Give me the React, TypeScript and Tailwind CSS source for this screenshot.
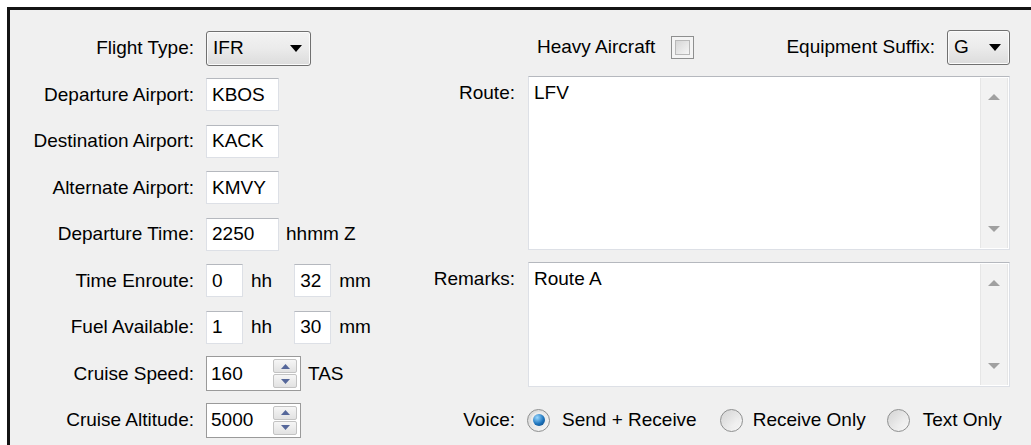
import React from 'react';

const font = "font-['Liberation_Sans',Arial,sans-serif]";

function TextBox({ value, className = '' }: { value: string; className?: string }) {
  return (
    <div
      className={`flex h-[33px] items-center border border-[#dde0e6] border-t-[#b5b8be] bg-white pl-[5px] ${className}`}
    >
      {value}
    </div>
  );
}

function Combo({ value, className = '' }: { value: string; className?: string }) {
  return (
    <div
      className={`flex h-[35px] items-center justify-between rounded-[3px] border border-[#707070] bg-gradient-to-b from-[#f3f3f3] via-[#ebebeb] to-[#dcdcdc] pl-[6px] pr-[8px] shadow-[inset_0_0_0_1px_#fbfbfb] ${className}`}
    >
      <span>{value}</span>
      <svg width="12" height="7" viewBox="0 0 12 7">
        <path d="M0 0h12L6 7z" fill="#000" />
      </svg>
    </div>
  );
}

function SpinButton({ up }: { up?: boolean }) {
  return (
    <div className="flex flex-1 items-center justify-center rounded-[2px] border border-[#c3c3c3] bg-gradient-to-b from-[#f6f6f6] to-[#e2e2e2]">
      <svg width="9" height="5" viewBox="0 0 9 5">
        <path d={up ? 'M0 5h9L4.5 0z' : 'M0 0h9L4.5 5z'} fill="#55679a" />
      </svg>
    </div>
  );
}

function SpinBox({ value }: { value: string }) {
  return (
    <div className="flex h-[35px] w-[95px] items-center border border-[#9a9a9a] bg-white pl-[4px] pr-[3px]">
      <span className="flex-1">{value}</span>
      <div className="flex h-[29px] w-[24px] flex-col gap-[1px]">
        <SpinButton up />
        <SpinButton />
      </div>
    </div>
  );
}

function CheckBox({ className = '' }: { className?: string }) {
  return (
    <div className={`h-[23px] w-[23px] border border-[#8e8f8f] bg-[#f4f4f4] p-[3px] ${className}`}>
      <div className="h-full w-full border border-[#b8b8b8] bg-gradient-to-br from-[#d6d6d6] to-[#f6f6f6]" />
    </div>
  );
}

function Radio({ checked, className = '' }: { checked?: boolean; className?: string }) {
  return (
    <div
      className={`flex h-[23px] w-[23px] items-center justify-center rounded-full border border-[#8e8f8f] bg-gradient-to-br from-[#d4d4d4] to-[#fafafa] ${className}`}
    >
      {checked ? (
        <div className="h-[12px] w-[12px] rounded-full bg-[radial-gradient(circle_at_35%_30%,#9ad8ff,#1d74bd_55%,#0c3d72)] shadow-[0_0_0_2px_#ececec]" />
      ) : (
        <div className="h-[13px] w-[13px] rounded-full bg-gradient-to-br from-[#dadada] to-[#f6f6f6]" />
      )}
    </div>
  );
}

function ScrollBar() {
  return (
    <div className="my-[1px] mr-[1px] flex w-[28px] flex-col items-center justify-between border-x border-[#e6e6e6] bg-[#f2f2f2] py-[16px]">
      <svg width="12" height="6" viewBox="0 0 12 6">
        <path d="M0 6h12L6 0z" fill="#a0a0a0" />
      </svg>
      <svg width="12" height="6" viewBox="0 0 12 6">
        <path d="M0 0h12L6 6z" fill="#a0a0a0" />
      </svg>
    </div>
  );
}

function TextArea({ value, className }: { value: string; className: string }) {
  return (
    <div className={`flex w-[482px] border border-[#dde0e6] border-t-[#b5b8be] bg-white ${className}`}>
      <div className="flex-1 pl-[5px] pt-[5px]">{value}</div>
      <ScrollBar />
    </div>
  );
}

function HourMinute({ hours, minutes }: { hours: string; minutes: string }) {
  return (
    <>
      <TextBox value={hours} className="w-[37px]" />
      <span className="ml-[8px]">hh</span>
      <TextBox value={minutes} className="ml-[22px] w-[37px]" />
      <span className="ml-[8px]">mm</span>
    </>
  );
}

const leftRows: { label: string; field: React.ReactNode }[] = [
  { label: 'Flight Type:', field: <Combo value="IFR" className="w-[105px]" /> },
  { label: 'Departure Airport:', field: <TextBox value="KBOS" className="w-[73px]" /> },
  { label: 'Destination Airport:', field: <TextBox value="KACK" className="w-[73px]" /> },
  { label: 'Alternate Airport:', field: <TextBox value="KMVY" className="w-[73px]" /> },
  {
    label: 'Departure Time:',
    field: (
      <>
        <TextBox value="2250" className="w-[73px]" />
        <span className="ml-[7px]">hhmm Z</span>
      </>
    ),
  },
  { label: 'Time Enroute:', field: <HourMinute hours="0" minutes="32" /> },
  { label: 'Fuel Available:', field: <HourMinute hours="1" minutes="30" /> },
  {
    label: 'Cruise Speed:',
    field: (
      <>
        <SpinBox value="160" />
        <span className="ml-[7px]">TAS</span>
      </>
    ),
  },
  { label: 'Cruise Altitude:', field: <SpinBox value="5000" /> },
];

export default function App() {
  return (
    <div className={`h-[445px] w-[1031px] overflow-hidden bg-white pl-[7px] pt-[7px] text-[19px] leading-[22px] text-black ${font}`}>
      <div className="flex h-full border-l-[3px] border-t-[3px] border-[#141414] bg-[#f0f0f0]">
        {/* flight details */}
        <div className="grid w-[410px] grid-cols-[184px_1fr] grid-rows-[repeat(9,46.5px)] content-start items-center gap-x-[12px] pt-[15px]">
          {leftRows.map((row) => (
            <React.Fragment key={row.label}>
              <div className="text-right">{row.label}</div>
              <div className="flex items-center">{row.field}</div>
            </React.Fragment>
          ))}
        </div>

        {/* route, remarks, voice */}
        <div className="flex flex-col pt-[14px]">
          <div className="flex h-[46px] items-center">
            <div className="w-[95px]" />
            <div className="ml-[13px] flex w-[482px] items-center justify-between pl-[9px]">
              <div className="flex items-center">
                <span>Heavy Aircraft</span>
                <CheckBox className="ml-[16px]" />
              </div>
              <div className="flex items-center">
                <span>Equipment Suffix:</span>
                <Combo value="G" className="ml-[12px] w-[63px]" />
              </div>
            </div>
          </div>
          <div className="mt-[6px] flex">
            <div className="w-[95px] pt-[6px] text-right">Route:</div>
            <TextArea value="LFV" className="ml-[13px] h-[174px]" />
          </div>
          <div className="mt-[12px] flex">
            <div className="w-[95px] pt-[6px] text-right">Remarks:</div>
            <TextArea value="Route A" className="ml-[13px] h-[125px]" />
          </div>
          <div className="mt-[10px] flex h-[46px] items-center">
            <div className="w-[95px] text-right">Voice:</div>
            <div className="ml-[12px] flex items-center">
              <Radio checked />
              <span className="ml-[12px]">Send + Receive</span>
              <Radio className="ml-[23px]" />
              <span className="ml-[10px]">Receive Only</span>
              <Radio className="ml-[21px]" />
              <span className="ml-[13px]">Text Only</span>
            </div>
          </div>
        </div>
      </div>
    </div>
  );
}
